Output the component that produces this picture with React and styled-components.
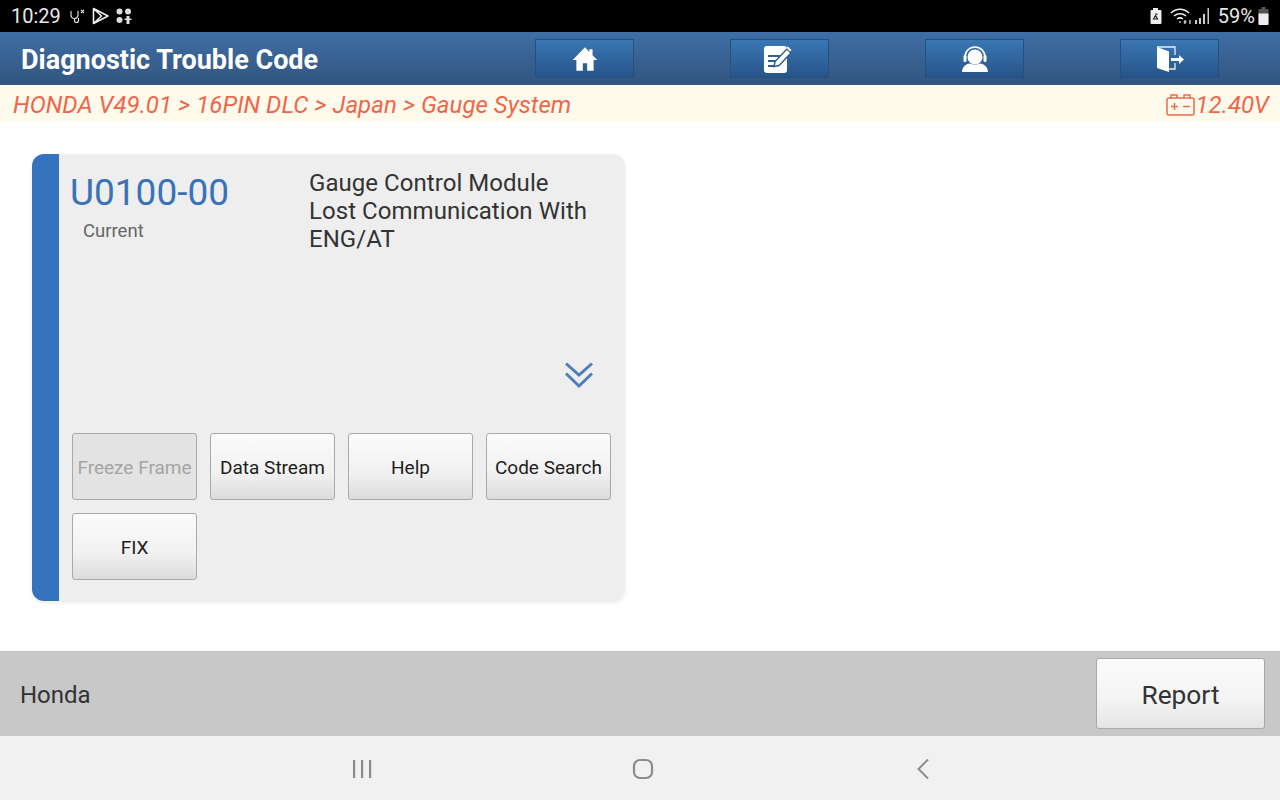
import React from 'react';
import styled, { createGlobalStyle } from 'styled-components';

const Global = createGlobalStyle`
  html, body { margin: 0; padding: 0; background: #fff; }
  body { font-family: Roboto, "Liberation Sans", sans-serif; }
  * { box-sizing: border-box; }
`;

const Screen = styled.div`
  width: 1280px; height: 800px; display: flex; flex-direction: column; overflow: hidden;
`;
const StatusBar = styled.div`
  height: 32px; flex: none; background: #000; color: #e8e8e8; display: flex; align-items: center;
  padding: 0 11px 0 11px; justify-content: space-between; font-size: 20px;
`;
const StatusGroup = styled.div`
  display: flex; align-items: center; gap: ${p => p.$gap || 0}px; margin-left: ${p => p.$ml || 0}px;
`;
const Percent = styled.span`
  margin-left: 8px;
`;
const Glyph = styled.svg`
  display: block; flex: none;
  margin-left: ${p => p.$ml || 0}px;
  margin-right: ${p => p.$mr || 0}px;
`;
const Header = styled.header`
  height: 53px; flex: none; background: linear-gradient(#3f6ea6, #32557f); display: flex; align-items: flex-start;
  padding: 7px 0 0 21px;
`;
const Title = styled.h1`
  margin: 1px 0 0; width: 514px; flex: none; font-size: 27px; line-height: 40px; font-weight: 700; color: #fff;
`;
const HeadActions = styled.div`
  display: flex; gap: 96px;
`;
const HeadButton = styled.button`
  width: 99px; height: 39px; padding: 0; border: 1px solid #23507f; background: linear-gradient(#3a77b3, #27548a);
  display: flex; align-items: center; justify-content: center;
`;
const Crumb = styled.div`
  height: 37px; flex: none; background: #fffbec; color: #f0654a; font-style: italic; font-size: 24px; letter-spacing: 0.04px;
  display: flex; align-items: center; justify-content: space-between; padding: 2px 11px 0 13px;
`;
const Volt = styled.div`
  display: flex; align-items: center;
`;
const Main = styled.main`
  flex: 1; background: #fff; padding: 32px;
`;
const Card = styled.section`
  width: 593px; height: 447px; background: #eeeeee; border-left: 27px solid #3673bf;
  border-radius: 12px; box-shadow: 0 2px 4px rgba(0,0,0,.08); display: flex; flex-direction: column;
  padding: 0 14px 21px 13px;
`;
const CardTop = styled.div`
  display: flex; height: 203px; flex: none; padding-top: 15px;
`;
const CodeCol = styled.div`
  width: 239px; flex: none; margin-left: -2px;
`;
const Code = styled.div`
  font-size: 37px; line-height: 46px; margin-top: 1px; color: #3a72b8;
`;
const State = styled.div`
  font-size: 18.5px; line-height: 24px; color: #666; margin: 3px 0 0 13px;
`;
const Desc = styled.div`
  font-size: 24px; line-height: 28px; color: #333; letter-spacing: 0.05px;
`;
const Expand = styled.div`
  height: 76px; flex: none; display: flex; justify-content: flex-end; align-items: flex-start; padding: 2px 17px 0 0;
`;
const Buttons = styled.div`
  display: grid; grid-template-columns: repeat(4, 125px); gap: 13px; grid-auto-rows: 67px;
`;
const Btn = styled.button`
  border: 1px solid #a9a9a9; border-radius: 3px; padding: 2px 0 0; font: 400 19px Roboto, sans-serif;
  color: ${p => (p.disabled ? '#a4a4a4' : '#1d1d1d')};
  background: ${p => (p.disabled ? '#e3e3e3' : 'linear-gradient(#fbfbfb, #f1f1f1 60%, #dcdcdc)')};
`;
const Footer = styled.footer`
  height: 85px; flex: none; background: #c8c8c8; display: flex; align-items: center; justify-content: space-between;
  padding: 0 15px 0 20px; font-size: 24px; color: #333;
`;
const Brand = styled.span`
  padding-top: 2px;
`;
const ReportBtn = styled.button`
  width: 169px; height: 71px; border: 1px solid #a8a8a8; border-radius: 3px; padding: 2px 0 0;
  font: 400 26.3px Roboto, sans-serif; color: #333; background: linear-gradient(#fbfbfb, #f3f3f3 60%, #e4e4e4);
`;
const NavBar = styled.nav`
  height: 64px; flex: none; background: #f1f1f1; display: flex; align-items: center; padding: 2px 350px 0 352px;
  justify-content: space-between;
`;

const Svg = ({ w, h, vb, children, ...r }) => (
  <Glyph width={w} height={h} viewBox={vb || `0 0 ${w} ${h}`} {...r}>{children}</Glyph>
);

export default function App() {
  return (
    <Screen>
      <Global />
      <StatusBar>
        <StatusGroup>
          <span>10:29</span>
          <StatusGroup $gap={7} $ml={8}>
            <Svg w={16} h={15} fill="none" stroke="#ddd" strokeWidth="1.2">
              <path d="M2 2v4a3.500 3.500 0 0 0 7 0V2M5.500 9.500v2a2 2 0 0 0 4 0V9M12 1l3 3M15 1l-3 3" />
            </Svg>
            <Svg w={17} h={18} fill="none" stroke="#eee" strokeWidth="1.6" strokeLinejoin="round">
              <path d="M1.500 1.500v15L16 9zM1.500 1.500l8 7.500-8 7.500" />
            </Svg>
            <Svg w={16} h={16} fill="#ddd">
              <circle cx="3.500" cy="3.500" r="3" /><circle cx="12" cy="3.500" r="3" />
              <circle cx="3.500" cy="12" r="3" /><path d="M8.500 10.500h7v1.500h-7zM10.500 8h3v8h-3z" />
            </Svg>
          </StatusGroup>
        </StatusGroup>
        <StatusGroup>
          <Svg w={14} h={18} fill="#eee" $mr={7}>
            <path d="M4 1h5v2h2.500a1 1 0 0 1 1 1v12a1 1 0 0 1-1 1h-9a1 1 0 0 1-1-1V4a1 1 0 0 1 1-1H4z" />
            <path d="M4.500 12l2-3.500 2 3.500zM6.500 6.500l2 1" stroke="#222" strokeWidth="1.2" fill="none" />
          </Svg>
          <Svg w={21} h={18} fill="none" stroke="#eee" strokeWidth="1.5">
            <path d="M1 6c5-5 13-5 18 0M4 9c3.500-3 8.500-3 12 0M7 12c2-1.500 4-1.500 6 0" />
            <path d="M10 14v2M15 13v4M13.500 15h3M20 13v4" strokeWidth="1.2" />
          </Svg>
          <Svg w={15} h={20} fill="#ccc" $ml={4}>
            <rect x="0" y="14" width="2" height="4" /><rect x="4" y="12" width="2" height="6" />
            <rect x="8" y="8" width="2" height="10" /><rect x="12.500" y="2" width="1.500" height="16" />
          </Svg>
          <Percent>59%</Percent>
          <Svg w={11} h={18} $ml={3}>
            <path d="M3.500 0h4v2h3v16H.5V2h3z" fill="#555" />
            <path d="M.5 6.500h10V17a1 1 0 0 1-1 1h-8a1 1 0 0 1-1-1z" fill="#eee" />
          </Svg>
        </StatusGroup>
      </StatusBar>

      <Header>
        <Title>Diagnostic Trouble Code</Title>
        <HeadActions>
          <HeadButton aria-label="Home">
            <Svg w={28} h={28} vb="0 0 26 26" fill="#fff">
              <path d="M13 2 1.500 14H5v10h6v-7h4v7h6V14h3.500L20 9.500V4h-3v2.500z" />
            </Svg>
          </HeadButton>
          <HeadButton aria-label="Notes">
            <Svg w={30} h={30} fill="none" $mr={3}>
              <rect x="1" y="2" width="23" height="27" rx="3" fill="#fff" />
              <path d="M5 12h12M5 17h8M5 22h6" stroke="#2f5f96" strokeWidth="2" />
              <path d="M11 22.500l1-5L24 5l4 4-12 12.500z" fill="#fff" stroke="#2f5f96" strokeWidth="1.500" />
              <path d="M25 2.500l3.500 3.500-1.500 1.500L23.500 4z" fill="#fff" />
            </Svg>
          </HeadButton>
          <HeadButton aria-label="Support">
            <Svg w={28} h={28} fill="none">
              <path d="M4 12a10 10 0 0 1 20 0" stroke="#fff" strokeWidth="1.600" />
              <rect x="2.500" y="10" width="3" height="7" rx="1.500" fill="#fff" />
              <rect x="22.500" y="10" width="3" height="7" rx="1.500" fill="#fff" />
              <ellipse cx="14" cy="12" rx="7.500" ry="7.500" fill="#fff" />
              <path d="M1 27c0-5 4-8 8-8.500 2.500 1.500 7.500 1.500 10 0 4 .5 8 3.500 8 8.500z" fill="#fff" />
            </Svg>
          </HeadButton>
          <HeadButton aria-label="Exit">
            <Svg w={28} h={28} fill="none" $ml={1}>
              <path d="M1 2l12 4.500V27L1 23z" fill="#fff" />
              <path d="M1 2h18v8M19 18v6h-6" stroke="#e8eef5" strokeWidth="1.300" />
              <path d="M15 13h8v-3l5 4.500-5 4.500v-3h-8z" fill="#fff" />
            </Svg>
          </HeadButton>
        </HeadActions>
      </Header>

      <Crumb>
        <span>HONDA V49.01 &gt; 16PIN DLC &gt; Japan &gt; Gauge System</span>
        <Volt>
          <Svg w={29} h={22} fill="none" stroke="#ee6a4e" strokeWidth="1.500">
            <rect x="1" y="4" width="27" height="17" rx="2" />
            <path d="M5 4V1h6v3M18 4V1h6v3M5 12.500h7M8.500 9v7M17 12.500h7" />
          </Svg>
          <span>12.40V</span>
        </Volt>
      </Crumb>

      <Main>
        <Card>
          <CardTop>
            <CodeCol>
              <Code>U0100-00</Code>
              <State>Current</State>
            </CodeCol>
            <Desc>Gauge Control Module<br />Lost Communication With<br />ENG/AT</Desc>
          </CardTop>
          <Expand>
            <Svg w={30} h={30} fill="none" stroke="#4f7db9" strokeWidth="3">
              <path d="M2 4.500 15 16 28 4.500M2 14.500 15 27 28 14.500" />
            </Svg>
          </Expand>
          <Buttons>
            <Btn disabled>Freeze Frame</Btn>
            <Btn>Data Stream</Btn>
            <Btn>Help</Btn>
            <Btn>Code Search</Btn>
            <Btn>FIX</Btn>
          </Buttons>
        </Card>
      </Main>

      <Footer>
        <Brand>Honda</Brand>
        <ReportBtn>Report</ReportBtn>
      </Footer>

      <NavBar>
        <Svg w={20} h={20} fill="#8c8c8c">
          <rect x="1" y="1" width="2.200" height="18" /><rect x="9" y="1" width="2.200" height="18" /><rect x="17" y="1" width="2.200" height="18" />
        </Svg>
        <Svg w={22} h={22} fill="none" stroke="#8c8c8c" strokeWidth="2.200" $mr={3}>
          <rect x="2" y="2" width="18" height="18" rx="6" />
        </Svg>
        <Svg w={14} h={22} fill="none" stroke="#8c8c8c" strokeWidth="2">
          <path d="M12 1.500 2.500 11l9.500 9.500" />
        </Svg>
      </NavBar>
    </Screen>
  );
}
